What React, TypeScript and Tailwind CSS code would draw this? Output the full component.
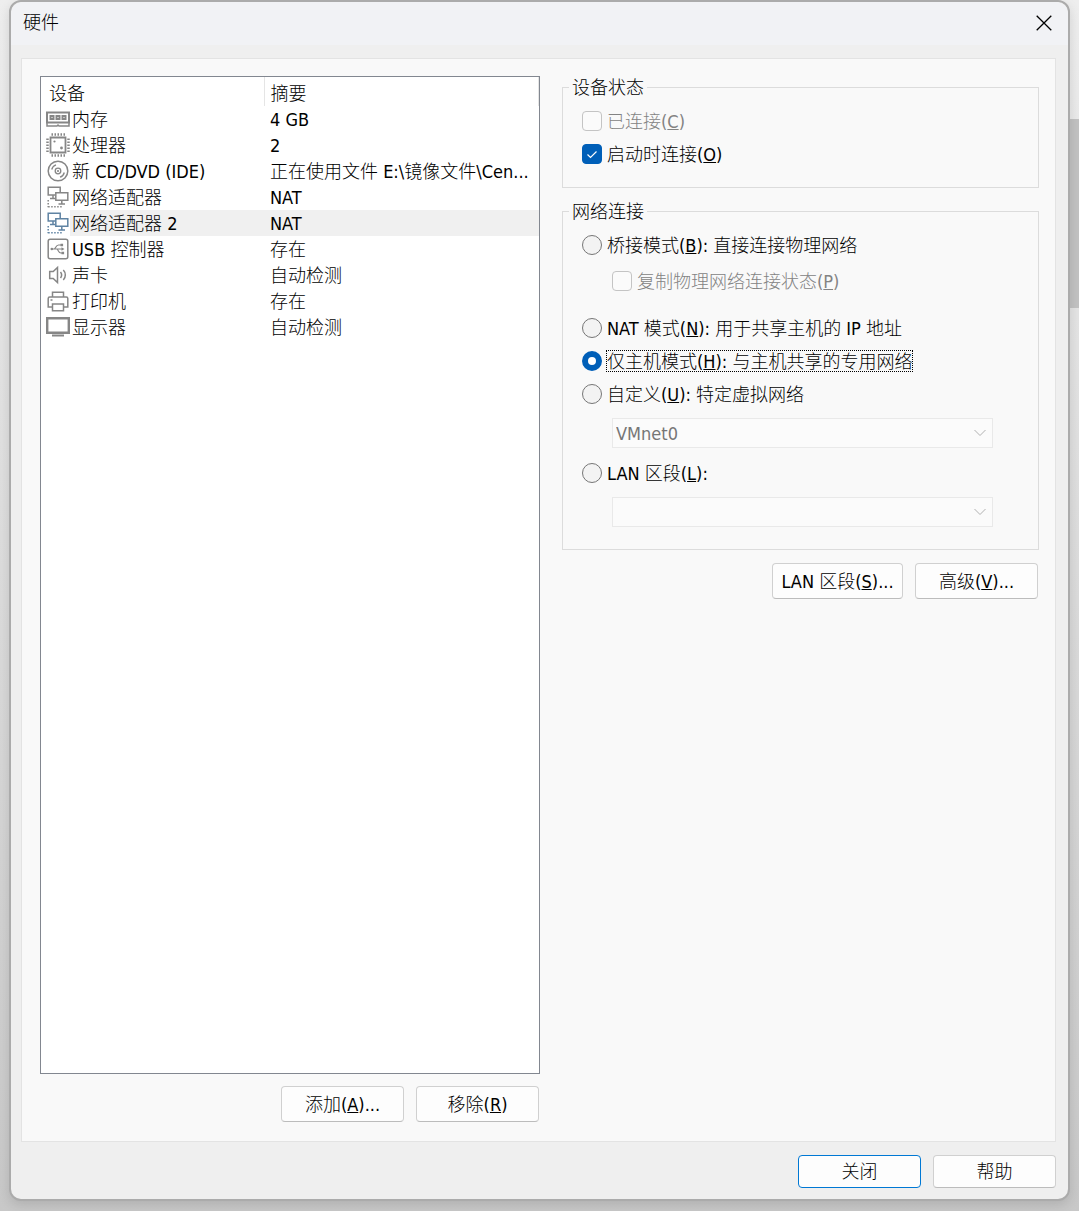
import type { ReactNode } from "react";

const MemoryIcon = () => (
	<>
		<path d="M1 5.5h22v10H1z" strokeWidth="2" />
		<path d="M1 15v4h10l1-1 1 1h10v-4" />
		<path d="M4.5 9h3v3h-3zM10.5 9h3v3h-3zM16.5 9h3v3h-3z" strokeWidth="2" />
	</>
);

const CpuIcon = () => (
	<>
		<path d="M4.5 4.5h15v15h-15z" strokeWidth="1.8" />
		<path
			d="M5.500 1.500h13.500M5.500 22.500h13.500M1.500 5.500v13.500M22.500 5.500v13.500"
			strokeWidth="2.5"
			strokeDasharray="1.5 1.5"
		/>
		<circle cx="8.5" cy="8.5" r="1.1" fill="currentColor" stroke="none" />
		<circle cx="15.5" cy="15" r="1.400" fill="currentColor" stroke="none" />
	</>
);

const DiscIcon = () => (
	<>
		<circle cx="12" cy="12" r="9.8" />
		<circle cx="12" cy="12" r="2.8" strokeWidth="1.3" />
		<circle cx="12" cy="12" r="1.1" fill="currentColor" stroke="none" />
		<path d="M5.700 10.500a6.500 6.500 0 0 1 4.300-4.700M18.300 13.500a6.500 6.500 0 0 1-4.300 4.700" strokeWidth="1.3" />
	</>
);

const NetworkIcon = () => (
	<>
		<path d="M9 10H2.2V2.2h12V7" />
		<path d="M9.8 7.7h12v7.6h-12zM7 10v3M4 13.5h5M15.8 15.5v3M12.5 19h6.5" />
		<path d="M2.2 15v7.3M2.2 21.8h14" strokeDasharray="1.5 1.5" />
	</>
);

const UsbIcon = () => (
	<>
		<rect x="2.2" y="2.2" width="19.6" height="19.6" rx="2" />
		<path d="M5 12h11M8 12c2 0 1.500-4 4.500-4H15M10.500 12c2 0 1.500 4 4.500 4h1.500" strokeWidth="1.2" />
		<circle cx="5.800" cy="12" r="1.300" fill="currentColor" stroke="none" />
		<path d="M14.500 6.700h2.600v2.600h-2.600zM15.500 14.700h2.600v2.600h-2.600zM15.500 10.200l3 1.800-3 1.800z" fill="currentColor" stroke="none" />
	</>
);

const SoundIcon = () => (
	<>
		<path d="M3.700 8.500h3.500L11.500 4.500v15l-4.300-4H3.700z" />
		<path d="M14.500 9c1.300 1.700 1.300 4.300 0 6M17.300 7c2.700 2.700 2.700 7.300 0 10" />
	</>
);

const PrinterIcon = () => (
	<>
		<path d="M6.500 8V3.200h11V8M6 18H2.200V9.500q0-1.500 1.500-1.500h16.600q1.500 0 1.500 1.500V18H18" />
		<path d="M6.500 15h11v6.800h-11z" />
		<path d="M4.500 11h2" />
	</>
);

const DisplayIcon = () => (
	<>
		<path d="M1.200 3.200h21.600v14.600H1.200z" strokeWidth="2.400" />
		<path d="M6 20.500h12" strokeWidth="2" />
	</>
);

interface Device {
	name: string;
	summary: string;
	icon: ReactNode;
	selected?: boolean;
}

const devices: Device[] = [
	{ name: "内存", summary: "4 GB", icon: <MemoryIcon /> },
	{ name: "处理器", summary: "2", icon: <CpuIcon /> },
	{ name: "新 CD/DVD (IDE)", summary: "正在使用文件 E:\\镜像文件\\Cen...", icon: <DiscIcon /> },
	{ name: "网络适配器", summary: "NAT", icon: <NetworkIcon /> },
	{ name: "网络适配器 2", summary: "NAT", icon: <NetworkIcon />, selected: true },
	{ name: "USB 控制器", summary: "存在", icon: <UsbIcon /> },
	{ name: "声卡", summary: "自动检测", icon: <SoundIcon /> },
	{ name: "打印机", summary: "存在", icon: <PrinterIcon /> },
	{ name: "显示器", summary: "自动检测", icon: <DisplayIcon /> },
];

const DeviceTable = () => (
	<div className="flex-1 border border-[#828790] bg-white">
		<table className="w-full table-fixed border-collapse text-left">
			<colgroup>
				<col className="w-[29px]" />
				<col className="w-[194px]" />
				<col />
			</colgroup>
			<thead>
				<tr className="h-[29px]">
					<th colSpan={2} className="border-r border-[#e5e5e5] pt-1 pl-2 font-light">设备</th>
					<th className="border-r border-[#e5e5e5] pt-1 pl-1.5 font-light">摘要</th>
				</tr>
			</thead>
			<tbody>
				{devices.map((d) => (
					<tr key={d.name} className="h-[26px]">
						<td className="p-0 pl-[5px]">
							<svg
								viewBox="0 0 24 24"
								fill="none"
								stroke="currentColor"
								strokeWidth="1.5"
								className={d.selected ? "block size-6 text-[#5f83a3]" : "block size-6 text-[#868686]"}
							>
								{d.icon}
							</svg>
						</td>
						<td className={d.selected ? "truncate bg-[#f0f0f0] p-0 pt-0.5 pl-0.5" : "truncate p-0 pt-0.5 pl-0.5"}>
							{d.name}
						</td>
						<td className={d.selected ? "truncate bg-[#f0f0f0] p-0 pt-0.5 pl-1.5" : "truncate p-0 pt-0.5 pl-1.5"}>
							{d.summary}
						</td>
					</tr>
				))}
			</tbody>
		</table>
	</div>
);

interface ButtonProps {
	children: ReactNode;
	className?: string;
}

const Button = ({ children, className = "h-9 w-[123px] border-[#d0d0d0] border-b-[#bcbcbc] pt-0.5" }: ButtonProps) => (
	<button type="button" className={`rounded border bg-[#fdfdfd] whitespace-nowrap ${className}`}>
		{children}
	</button>
);

interface ChoiceProps {
	children: ReactNode;
	checked?: boolean;
	disabled?: boolean;
}

const CheckBox = ({ children, checked, disabled }: ChoiceProps) => (
	<label className={disabled ? "flex h-6 items-center gap-[5px] text-[#838383]" : "flex h-6 items-center gap-[5px]"}>
		<span className="grid size-5 shrink-0">
			<input
				type="checkbox"
				defaultChecked={checked}
				disabled={disabled}
				className="peer col-start-1 row-start-1 size-5 appearance-none rounded border border-[#c4c4c4] bg-[#fbfbfb] checked:border-[#005fb8] checked:bg-[#005fb8]"
			/>
			<svg
				viewBox="0 0 20 20"
				fill="none"
				stroke="white"
				strokeWidth="1.200"
				className="pointer-events-none invisible col-start-1 row-start-1 size-5 peer-checked:visible"
			>
				<path d="M5.500 10.500l3 3 6-6" />
			</svg>
		</span>
		<span className="pt-0.5">{children}</span>
	</label>
);

const Radio = ({ children, checked }: ChoiceProps) => (
	<label className="flex h-6 items-center gap-[5px]">
		<input
			type="radio"
			name="network"
			defaultChecked={checked}
			className="peer size-5 shrink-0 appearance-none rounded-full border border-[#767676] bg-[#f3f3f3] checked:border-[6px] checked:border-[#005fb8] checked:bg-white"
		/>
		<span className="pt-0.5 leading-[18px] peer-checked:outline-1 peer-checked:outline-black peer-checked:outline-dotted">
			{children}
		</span>
	</label>
);

interface SelectProps {
	label: string;
	value: string;
}

const Select = ({ label, value }: SelectProps) => (
	<div className="mt-3 mr-[45px] ml-[30px] grid items-center">
		<select
			aria-label={label}
			disabled
			className="col-start-1 row-start-1 h-[30px] w-full appearance-none border border-[#e9e9e9] bg-[#fbfbfb] pt-0.5 pl-[3px] text-[#767676] opacity-100"
		>
			<option>{value}</option>
		</select>
		<svg
			viewBox="0 0 12 8"
			fill="none"
			stroke="#b0b0b0"
			className="pointer-events-none col-start-1 row-start-1 mr-[7px] h-2 w-3 justify-self-end"
		>
			<path d="M.5 1L6 6.500 11.500 1" />
		</svg>
	</div>
);

const App = () => (
	<div className="relative flex min-h-screen flex-col bg-linear-to-b from-[#eeeeee] to-[#c8c8c8] px-[9px] pb-2.5 font-['DejaVu_Sans_Condensed','Noto_Sans_CJK_SC',sans-serif] text-lg leading-6 font-light text-black">
		<div className="absolute top-[119px] right-0 h-[189px] w-5 bg-[#c2c2c2]" />
		<main className="relative flex flex-1 flex-col rounded-xl border-2 border-[#ababab] bg-[#efefef] shadow-[0_4px_12px_rgba(0,0,0,0.12)]">
			<header className="flex h-[43px] items-center justify-between rounded-t-xl bg-[#f1f2f5] pr-4 pb-0.5 pl-3">
				<h1>硬件</h1>
				<button type="button" aria-label="关闭">
					<svg viewBox="0 0 16 16" fill="none" stroke="black" strokeWidth="1.300" className="block size-4">
						<path d="M.7.7l14.600 14.600M15.300.7L.7 15.300" />
					</svg>
				</button>
			</header>

			<section className="mt-[13px] mr-3 ml-2.5 grid flex-1 grid-cols-[500fr_477fr] gap-[22px] border border-[#e3e3e3] bg-[#f9f9f9] pt-[17px] pr-4 pb-[19px] pl-[18px]">
				<div className="flex min-w-0 flex-col">
					<DeviceTable />
					<div className="mt-3 flex justify-end gap-3 pr-px">
						<Button>添加(<u>A</u>)...</Button>
						<Button>移除(<u>R</u>)</Button>
					</div>
				</div>

				<div className="min-w-0">
					<fieldset className="border border-[#dcdcdc] pt-2.5 pb-[21px]">
						<legend className="ml-1.5 px-[3px] leading-[23px]">设备状态</legend>
						<div className="flex flex-col gap-[9px] pl-[19px]">
							<CheckBox disabled>已连接(<u>C</u>)</CheckBox>
							<CheckBox checked>启动时连接(<u>O</u>)</CheckBox>
						</div>
					</fieldset>

					<fieldset className="mt-3 border border-[#dcdcdc] pt-2.5 pb-[22px]">
						<legend className="ml-1.5 px-[3px] leading-[23px]">网络连接</legend>
						<div className="pl-[19px]">
							<Radio>桥接模式(<u>B</u>): 直接连接物理网络</Radio>
							<div className="mt-3 mb-[23px] pl-[30px]">
								<CheckBox disabled>复制物理网络连接状态(<u>P</u>)</CheckBox>
							</div>
							<div className="flex flex-col gap-[9px]">
								<Radio>NAT 模式(<u>N</u>): 用于共享主机的 IP 地址</Radio>
								<Radio checked>仅主机模式(<u>H</u>): 与主机共享的专用网络</Radio>
								<Radio>自定义(<u>U</u>): 特定虚拟网络</Radio>
							</div>
							<Select label="特定虚拟网络" value="VMnet0" />
							<div className="mt-[13px]">
								<Radio>LAN 区段(<u>L</u>):</Radio>
							</div>
							<Select label="LAN 区段" value="" />
						</div>
					</fieldset>

					<div className="mt-[13px] flex justify-end gap-3 pr-px">
						<Button className="h-9 w-[131px] border-[#d0d0d0] border-b-[#bcbcbc] pt-0.5">LAN 区段(<u>S</u>)...</Button>
						<Button>高级(<u>V</u>)...</Button>
					</div>
				</div>
			</section>

			<footer className="mt-[13px] mr-3 mb-[11px] ml-2.5 flex justify-end gap-3">
				<Button className="h-[33px] w-[123px] border-[#0078d4]">关闭</Button>
				<Button className="h-[33px] w-[123px] border-[#d0d0d0] border-b-[#bcbcbc]">帮助</Button>
			</footer>
		</main>
	</div>
);

export default App;
